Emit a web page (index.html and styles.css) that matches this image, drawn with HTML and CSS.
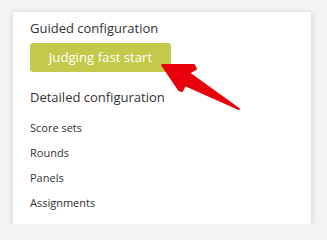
FILE: index.html
```html
<!DOCTYPE html>
<html>
<head>
<meta charset="utf-8">
<link rel="stylesheet" href="styles.css">
</head>
<body>
<div class="card">
  <div class="heading">Guided configuration</div>
  <div class="btn">Judging fast start</div>
  <div class="heading second">Detailed configuration</div>
  <ul class="links">
    <li>Score sets</li>
    <li>Rounds</li>
    <li>Panels</li>
    <li>Assignments</li>
  </ul>
  <svg class="arrow" width="90" height="60" viewBox="155 55 90 60">
    <polygon points="162,65 194,65 196,69 189,73 239,109 185,85 182,91 179,90" fill="#e8000b" stroke="#e8000b" stroke-width="2" stroke-linejoin="round"/>
  </svg>
</div>
</body>
</html>
```
FILE: styles.css
```css
html, body {
  margin: 0;
  padding: 0;
  background: #f4f4f4;
  font-family: "Open Sans", "Liberation Sans", sans-serif;
}
.card {
  position: relative;
  box-sizing: border-box;
  margin: 12px 0 0 13px;
  width: 298px;
  height: 212px;
  background: #fff;
  box-shadow: 0 1px 7px rgba(0,0,0,0.16);
  padding: 6px 17px 0 17px;
  color: #333;
}
.heading {
  font-size: 13px;
  line-height: 20px;
}
.btn {
  display: block;
  margin-top: 5px;
  width: 141px;
  height: 29px;
  box-sizing: border-box;
  background: #c3c94b;
  color: #fff;
  border-radius: 3px;
  font-size: 13.2px;
  line-height: 29px;
  text-align: center;
}
.second {
  margin-top: 15px;
}
.links {
  list-style: none;
  margin: 8px 0 0 0;
  padding: 0;
  font-size: 11px;
}
.links li {
  line-height: 25px;
}
.arrow {
  position: absolute;
  left: 142px;
  top: 43px;
}
```
